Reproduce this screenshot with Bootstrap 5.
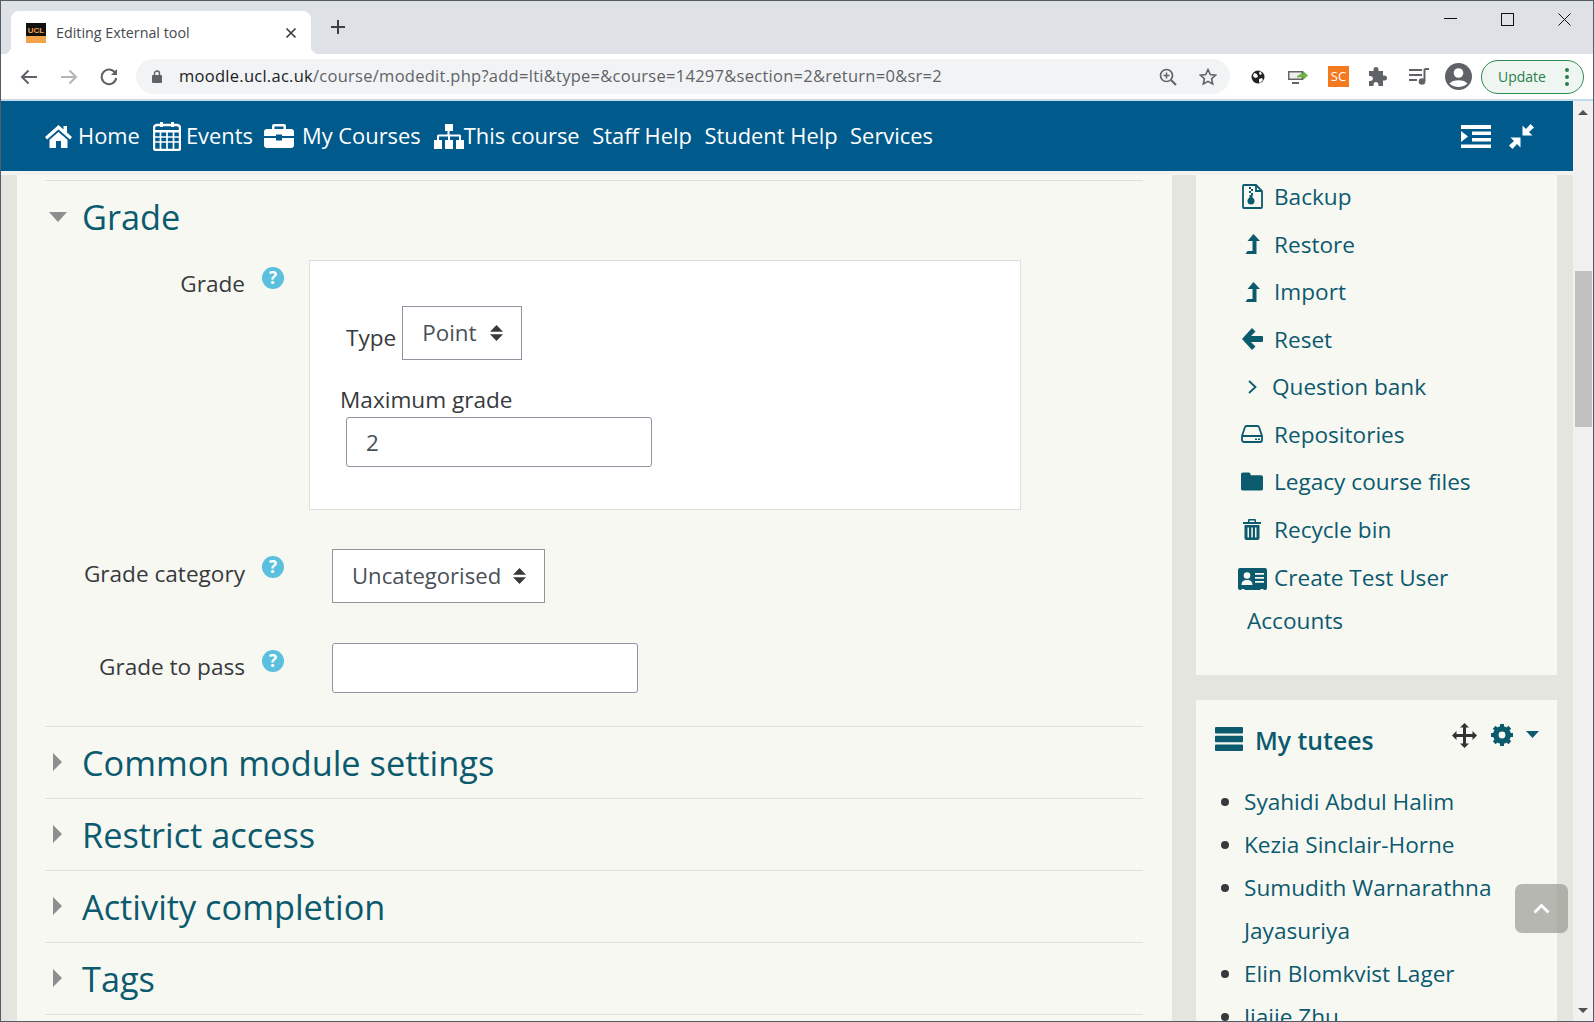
<!DOCTYPE html>
<html lang="en">
<head>
<meta charset="utf-8">
<title>Editing External tool</title>
<link href="https://cdn.jsdelivr.net/npm/bootstrap@5.3.0/dist/css/bootstrap.min.css" rel="stylesheet">
<style>
html,body{height:1022px;overflow:hidden;margin:0;background:#fff}
body{font-family:"Open Sans","Noto Sans",sans-serif;color:#373a3c}
.frame{height:1022px;border:1px solid #525d68;display:flex;flex-direction:column;overflow:hidden}
.tabstrip{height:53px;flex:none;background:#dee1e6;padding:10px 0 0 10px;display:flex;align-items:flex-start}
.tabbox{width:300px;height:43px;background:#fff;border-radius:8px 8px 0 0;display:flex;align-items:center;padding:0 14px 0 15px;position:relative}
.tabbox::before,.tabbox::after{content:"";position:absolute;bottom:0;width:8px;height:8px}
.tabbox::before{left:-8px;background:radial-gradient(circle at 0 0,transparent 8px,#fff 8.5px)}
.tabbox::after{right:-8px;background:radial-gradient(circle at 100% 0,transparent 8px,#fff 8.5px)}
.fav{width:20px;height:20px;background:linear-gradient(#111 0,#111 65%,#f4a24a 65%);color:#f4a24a;font:700 8px/15px "Liberation Sans",sans-serif;text-align:center;flex:none}
.tabtitle{font-size:14.3px;color:#45494e;margin-left:10px;flex:1;white-space:nowrap}
.plusmark{margin:8px 0 0 19px}
.wincontrols{margin-left:auto;display:flex}
.toolbar{height:47px;flex:none;background:#fff;border-bottom:2px solid #c6dbe7;display:flex;align-items:center}
.omni{height:35px;width:1094px;margin-left:18px;background:#f1f3f4;border-radius:18px;display:flex;align-items:center;padding:0 0 0 16px;flex:none}
.urlline{font-size:16.5px;letter-spacing:.27px;color:#5f6368;white-space:nowrap;margin-left:17px;flex:1}
.urlline b{font-weight:400;color:#202124}
.upd{width:103px;height:34px;margin-left:9px;border:1.5px solid #2f8a52;border-radius:17px;background:#eff6f1;color:#2a7d4b;font-size:14px;display:flex;align-items:center;padding-left:16px;flex:none}
.tbicon{flex:none;display:block}
.pagewrap{flex:1;display:flex;min-height:0}
.pageview{flex:1;min-width:0;position:relative;overflow:hidden;display:flex;flex-direction:column}
.sbar{width:20px;flex:none;background:#f1f1f1;display:flex;flex-direction:column;align-items:center;padding-top:9px}
.sbthumb{width:17px;height:156px;background:#c1c1c1;margin-top:156px}
.sbdown{margin-top:auto;margin-bottom:8px}
.topbar{height:70px;flex:none;background:#005a8c;padding:0 0 0 44px}
.topbar .navbar-nav .nav-link{color:#fff;font-size:21.9px;line-height:30px;padding:0;display:flex;align-items:center;white-space:nowrap}
.topbar .nav-link svg{display:block;flex:none}
.thinstrip{height:4px;flex:none;background:#f3f3ef}
.columns{flex:1;min-height:0;background:#e5e5df;display:flex;padding:0 16px;overflow:hidden}
.mainpane{width:1155px;flex:none;background:#f8f8f3;padding:5px 29px 0 28px}
.secrow{border-top:1px solid #e2e2dd;height:72.1px;display:flex;align-items:center;padding-left:8px}
.secrow h3,.secopen h3{font-size:34.3px;font-weight:400;color:#0b5a6e;margin:0;line-height:44px}
.tri-r{width:0;height:0;border-left:9.5px solid #8e8e8e;border-top:9px solid transparent;border-bottom:9px solid transparent;margin-right:20px;margin-top:-1px}
.tri-d{width:0;height:0;border-top:10px solid #8e8e8e;border-left:9.5px solid transparent;border-right:9.5px solid transparent;margin-right:15px;margin-left:4px}
.secopen{border-top:1px solid #e2e2dd;height:546px}
.sechead{display:flex;align-items:center;height:79px;padding-bottom:7px}
.fieldline{display:flex;align-items:flex-start}
.flabel{width:200px;text-align:right;font-size:22.6px;flex:none;color:#373a3c}
.hint{width:22px;height:22px;border-radius:50%;background:#5bc0de;color:#fff;font:700 17px/22px "Open Sans",sans-serif;text-align:center;margin-left:17px;margin-top:7px;flex:none}
.gradebox{width:712px;height:250px;margin-left:25px;background:#fff;border:1px solid #dedede;padding:45px 0 0 36px;flex:none}
.typeline{display:flex;align-items:flex-start;font-size:22.6px}
.form-select.pick{height:54px;border:1px solid #8f959e;border-radius:0;color:#495057;font-size:22.4px;padding:0 44px 0 19px;background-color:#fff;background-image:url("data:image/svg+xml,%3Csvg xmlns='http://www.w3.org/2000/svg' viewBox='0 0 13 16'%3E%3Cpath fill='%23373a3c' d='M6.500 0L13 6.800H0zM6.500 16L0 9.200h13z'/%3E%3C/svg%3E");background-size:13px 16px;background-position:right 18px center;background-repeat:no-repeat;width:auto;box-shadow:none}
.form-select.pick.pickwide{font-size:22.1px;padding-right:42px}
.form-control.entry{height:50px;border:1px solid #8f959e;border-radius:3px;color:#495057;font-size:22.4px;padding:0 19px;background:#fff}
.maxlabel{font-size:22.6px;margin:23px 0 1px -6px;line-height:33px}
.columngap{width:24px;flex:none}
.sidepane{width:361px;flex:none}
.sideblock{background:#f8f8f3;border:0;border-radius:0}
.linklist{list-style:none;margin:0;padding:0 0 33px 45px;font-size:22.6px;line-height:43px;height:500px}
.linklist li{display:flex;align-items:center;margin-bottom:4.5px;color:#0b5a6e}
.linklist li .slot{width:22px;flex:none;display:flex;justify-content:center}
.linklist li .lab{margin-left:11px}
.linklist li .lab.tight{margin-left:9px}
.linklist li.wrapline{display:block;margin:5px 0 0 6px}
.linklist .cardic{display:inline-block;vertical-align:-4px;margin:0 7px 0 -9px}
.tuteehead{display:flex;align-items:flex-start;padding:26px 0 0 19px;height:80px}
.tuteehead h5{font-size:24.8px;font-weight:600;color:#0b5a6e;margin:-2px 0 0 12px;line-height:32px}
.tutees{margin:0;padding:0 0 0 48px;font-size:22.6px;line-height:43px;color:#373a3c}
.tutees a{color:#0b5a6e;text-decoration:none}
.backtop{position:absolute;left:1514px;top:783px;width:53px;height:49px;border-radius:7px;background:rgba(140,140,134,.6);display:flex;align-items:center;justify-content:center}
</style>
</head>
<body>
<div class="frame">
  <div class="tabstrip">
    <div class="tabbox">
      <div class="fav">UCL</div>
      <div class="tabtitle">Editing External tool</div>
      <svg width="12" height="12" viewBox="0 0 12 12"><path d="M1.500 1.500l9 9M10.500 1.500l-9 9" stroke="#3c4043" stroke-width="1.700"/></svg>
    </div>
    <svg class="plusmark" width="16" height="16" viewBox="0 0 16 16"><path d="M8 1v14M1 8h14" stroke="#3c4043" stroke-width="2"/></svg>
    <div class="wincontrols">
      <svg width="150" height="26" viewBox="0 0 150 26"><path d="M1 7.500h13" stroke="#111" stroke-width="1"/><rect x="58.500" y="2.500" width="12" height="12" fill="none" stroke="#111" stroke-width="1"/><path d="M115.500 2.500l12 12M127.500 2.500l-12 12" stroke="#111" stroke-width="1"/></svg>
    </div>
  </div>
  <div class="toolbar">
    <svg class="tbicon" style="margin-left:19px" width="18" height="16" viewBox="0 0 18 16"><path d="M17 8H2M8.500 1.500L2 8l6.500 6.500" fill="none" stroke="#5f6368" stroke-width="2"/></svg>
    <svg class="tbicon" style="margin-left:22px" width="18" height="16" viewBox="0 0 18 16"><path d="M1 8h15M9.500 1.500L16 8l-6.500 6.500" fill="none" stroke="#b4b6b9" stroke-width="2"/></svg>
    <svg class="tbicon" style="margin-left:22px" width="18" height="18" viewBox="0 0 18 18"><path d="M15.200 5A7.300 7.300 0 1 0 16.200 10" fill="none" stroke="#5f6368" stroke-width="2"/><path d="M17 1v6h-6z" fill="#5f6368"/></svg>
    <div class="omni">
      <svg class="tbicon" width="10" height="13" viewBox="0 0 10 13"><path d="M2.500 5V3.500a2.500 2.500 0 0 1 5 0V5" fill="none" stroke="#5f6368" stroke-width="1.400"/><rect y="5" width="10" height="8" rx="1" fill="#5f6368"/></svg>
      <div class="urlline"><b>moodle.ucl.ac.uk</b>/course/modedit.php?add=lti&amp;type=&amp;course=14297&amp;section=2&amp;return=0&amp;sr=2</div>
      <svg class="tbicon" width="18" height="18" viewBox="0 0 18 18"><circle cx="7.500" cy="7.500" r="6" fill="none" stroke="#5f6368" stroke-width="1.700"/><path d="M12 12l5 5" stroke="#5f6368" stroke-width="2"/><path d="M7.500 4.500v6M4.500 7.500h6" stroke="#5f6368" stroke-width="1.500"/></svg>
      <svg class="tbicon" style="margin:0 13px 0 22px" width="18" height="18" viewBox="0 0 18 18"><path d="M9 1.500l2.300 5 5.300.6-4 3.600 1.100 5.300L9 13.300 4.300 16l1.100-5.300-4-3.600 5.300-.6z" fill="none" stroke="#5f6368" stroke-width="1.600"/></svg>
    </div>
    <svg class="tbicon" style="margin-left:21px" width="14" height="14" viewBox="0 0 14 14"><circle cx="7" cy="7" r="6.500" fill="#222"/><path d="M3 3l3 1 1 3-3 1-2-2zM9 1l2 3-2 1-1-2zM8 9l3-1 1 2-3 3-1-1z" fill="#fff"/></svg>
    <svg class="tbicon" style="margin-left:23px" width="20" height="16" viewBox="0 0 20 16"><rect x="0" y="2" width="15" height="9" fill="#666"/><rect x="1.500" y="3.500" width="12" height="6" fill="#eee"/><path d="M4 13h7v2H4z" fill="#666"/><path d="M9 9c0-3 3-4 6-4V2l5 4.500-5 4.500V8c-3 0-5 0-6 1z" fill="#6cb33f"/></svg>
    <div class="tbicon" style="margin-left:20px;width:21px;height:21px;background:#f37a1f;color:#fff;font-size:13px;line-height:21px;text-align:center">SC</div>
    <svg class="tbicon" style="margin-left:20px" width="19" height="19" viewBox="0 0 19 19"><path d="M7 0a2.500 2.500 0 0 1 2.500 2.500V4H14v4.500h1.500a2.500 2.500 0 0 1 0 5H14V19H9.500v-1.500a2.500 2.500 0 0 0-5 0V19H0v-5h1.500a2.500 2.500 0 0 0 0-5H0V4h4.500V2.500A2.500 2.500 0 0 1 7 0z" fill="#5f6368"/></svg>
    <svg class="tbicon" style="margin-left:21px" width="20" height="17" viewBox="0 0 20 17"><path d="M0 2h13M0 7h13M0 12h8" stroke="#5f6368" stroke-width="1.800"/><path d="M15.500 1v12" stroke="#5f6368" stroke-width="2"/><path d="M15.500 1H20" stroke="#5f6368" stroke-width="2"/><circle cx="13" cy="13.500" r="3.300" fill="#5f6368"/></svg>
    <svg class="tbicon" style="margin-left:16px" width="27" height="27" viewBox="0 0 27 27"><circle cx="13.500" cy="13.500" r="13.500" fill="#5f6368"/><circle cx="13.500" cy="10" r="4.800" fill="#fff"/><path d="M4.500 20.500c3-4.500 15-4.500 18 0-4 4.500-14 4.500-18 0z" fill="#fff"/></svg>
    <div class="upd">Update<svg class="ms-auto" style="margin-right:14px" width="4" height="18" viewBox="0 0 4 18"><circle cx="2" cy="2" r="2" fill="#2a7d4b"/><circle cx="2" cy="9" r="2" fill="#2a7d4b"/><circle cx="2" cy="16" r="2" fill="#2a7d4b"/></svg></div>
  </div>
  <div class="pagewrap">
    <div class="pageview">
      <nav class="navbar navbar-expand topbar">
        <ul class="navbar-nav flex-row align-items-center">
          <li class="nav-item"><a class="nav-link" href="#"><svg width="27" height="24" viewBox="0 0 27 24" style="margin-right:6px"><path fill="#fff" d="M13.500 1L0 13l2 2.400L13.500 5.500 25 15.400 27 13l-5-4.500V2h-3.500v3.400zM4.500 15.800l9-7.700 9 7.700V24H16v-7h-5v7H4.500z"/></svg>Home</a></li>
          <li class="nav-item"><a class="nav-link" href="#" style="margin-left:13px"><svg width="28" height="29" viewBox="0 0 28 29" style="margin-right:5px"><path fill="#fff" d="M7 0h3v5H7zM18 0h3v5h-3z"/><path fill="none" stroke="#fff" stroke-width="2.400" d="M4 3h20a3 3 0 0 1 3 3v20a2 2 0 0 1-2 2H3a2 2 0 0 1-2-2V6a3 3 0 0 1 3-3z"/><path fill="#fff" d="M1 8h26v2.500H1z"/><path fill="none" stroke="#fff" stroke-width="1.700" d="M1 15h26M1 20h26M7.500 10v18M14 10v18M20.500 10v18"/></svg>Events</a></li>
          <li class="nav-item"><a class="nav-link" href="#" style="margin-left:11px"><svg width="30" height="24" viewBox="0 0 30 24" style="margin-right:8px"><path fill="#fff" d="M10 0h10a2 2 0 0 1 2 2v3h5a3 3 0 0 1 3 3v4H18v-1.500h-6V12H0V8a3 3 0 0 1 3-3h5V2a2 2 0 0 1 2-2zm.500 2.500V5h9V2.500zM0 14h12v2.500h6V14h12v7a3 3 0 0 1-3 3H3a3 3 0 0 1-3-3z"/></svg>My Courses</a></li>
          <li class="nav-item"><a class="nav-link" href="#" style="margin-left:13px"><svg width="30" height="25" viewBox="0 0 30 25"><path fill="#fff" d="M11 0h8v7h-3.500v3.500H26a1.500 1.500 0 0 1 1 1.500v4h-2v-3.500h-9V16h-2v-3.500H5V16H3v-4a1.500 1.500 0 0 1 1.500-1.500h9V7H11zM0 16h8v9H0zM11 16h8v9h-8zM22 16h8v9h-8z"/></svg>This course</a></li>
          <li class="nav-item"><a class="nav-link" href="#" style="margin-left:12.500px">Staff Help</a></li>
          <li class="nav-item"><a class="nav-link" href="#" style="margin-left:12.500px">Student Help</a></li>
          <li class="nav-item"><a class="nav-link" href="#" style="margin-left:12.500px">Services</a></li>
        </ul>
        <div class="ms-auto d-flex align-items-center" style="margin-right:39px">
          <svg width="30" height="23" viewBox="0 0 30 23" style="margin-right:18px"><path fill="#fff" d="M0 0h30v4H0zM11 6.500h19v3.500H11zM11 13h19v3.500H11zM0 19.500h30V23H0zM0 6l7 5.500L0 17z"/></svg>
          <svg width="25" height="25" viewBox="0 0 25 25"><path fill="#fff" d="M13.500 1.500V11.500H23.500l-3.500-3.500 5-4.500L21.500 0l-4.500 5zM11.500 13.500H1.500L5 17l-5 4.500L3.500 25l4.500-5 3.500 3.500z"/></svg>
        </div>
      </nav>
      <div class="thinstrip"></div>
      <div class="columns">
        <main class="mainpane">
          <section class="secopen">
            <div class="sechead"><span class="tri-d"></span><h3>Grade</h3></div>
            <div class="fieldline">
              <div class="flabel" style="padding-top:7px">Grade</div>
              <div class="hint">?</div>
              <div class="gradebox">
                <div class="typeline"><span style="padding-top:15px;margin-right:6px">Type</span><select class="form-select pick"><option>Point</option></select></div>
                <label class="d-block maxlabel">Maximum grade</label>
                <input class="form-control entry" type="text" value="2" style="width:306px">
              </div>
            </div>
            <div class="fieldline" style="margin-top:39px">
              <div class="flabel" style="padding-top:8px">Grade category</div>
              <div class="hint">?</div>
              <div style="margin-left:48px"><select class="form-select pick pickwide"><option>Uncategorised</option></select></div>
            </div>
            <div class="fieldline" style="margin-top:40px">
              <div class="flabel" style="padding-top:7px">Grade to pass</div>
              <div class="hint">?</div>
              <div style="margin-left:48px"><input class="form-control entry" type="text" style="width:306px"></div>
            </div>
          </section>
          <section class="secrow"><span class="tri-r"></span><h3>Common module settings</h3></section>
          <section class="secrow"><span class="tri-r"></span><h3>Restrict access</h3></section>
          <section class="secrow"><span class="tri-r"></span><h3>Activity completion</h3></section>
          <section class="secrow"><span class="tri-r"></span><h3>Tags</h3></section>
          <section class="secrow"></section>
        </main>
        <div class="columngap"></div>
        <aside class="sidepane">
          <div class="card sideblock">
            <ul class="linklist">
              <li><span class="slot"><svg width="21" height="25" viewBox="0 0 21 25"><path fill="none" stroke="#0b5a6e" stroke-width="1.800" d="M2 1h12l6 6v16a1 1 0 0 1-1 1H2a1 1 0 0 1-1-1V2a1 1 0 0 1 1-1zM14 1v6h6"/><path fill="#0b5a6e" d="M7 3h2v2H7zM9 5h2v2H9zM7 7h2v2H7zM9 9h2v2H9z"/><circle cx="9" cy="17" r="3.500" fill="#0b5a6e"/><path fill="#0b5a6e" d="M7.500 11h3v4h-3z"/></svg></span><span class="lab">Backup</span></li>
              <li><span class="slot"><svg width="15" height="20" viewBox="0 0 15 20"><path fill="#0b5a6e" d="M8 0l6.500 7H11v13H0l2-3h5V7H2z" transform="translate(.5 0)"/></svg></span><span class="lab">Restore</span></li>
              <li><span class="slot"><svg width="15" height="20" viewBox="0 0 15 20"><path fill="#0b5a6e" d="M8 0l6.500 7H11v13H0l2-3h5V7H2z" transform="translate(.5 0)"/></svg></span><span class="lab">Import</span></li>
              <li><span class="slot"><svg width="21" height="22" viewBox="0 0 21 22"><path fill="#0b5a6e" d="M10 0l3.500 3.500L9 8h11a1 1 0 0 1 1 1v4a1 1 0 0 1-1 1H9l4.500 4.500L10 22 0 11z"/></svg></span><span class="lab">Reset</span></li>
              <li><span class="slot"><svg width="9" height="14" viewBox="0 0 9 14"><path fill="none" stroke="#0b5a6e" stroke-width="1.800" d="M1 1l6.500 6L1 13"/></svg></span><span class="lab tight">Question bank</span></li>
              <li><span class="slot"><svg width="22" height="18" viewBox="0 0 22 18"><path fill="none" stroke="#0b5a6e" stroke-width="1.800" d="M1 11l3-9a1.500 1.500 0 0 1 1.500-1h11A1.500 1.500 0 0 1 18 2l3 9v4a2 2 0 0 1-2 2H3a2 2 0 0 1-2-2zM1 11h20"/><path fill="#0b5a6e" d="M14 13.500h2v1.500h-2zM17 13.500h2v1.500h-2z"/></svg></span><span class="lab">Repositories</span></li>
              <li><span class="slot"><svg width="23" height="19" viewBox="0 0 23 19"><path fill="#0b5a6e" d="M2 0h6a2 2 0 0 1 2 2v1h11a2 2 0 0 1 2 2v12a2 2 0 0 1-2 2H2a2 2 0 0 1-2-2V2a2 2 0 0 1 2-2z"/></svg></span><span class="lab">Legacy course files</span></li>
              <li><span class="slot"><svg width="18" height="21" viewBox="0 0 18 21"><path fill="#0b5a6e" d="M6 0h6a1 1 0 0 1 1 1v2h5v2H0V3h5V1a1 1 0 0 1 1-1zm.500 1.500V3h5V1.500zM1.500 6h15v13a2 2 0 0 1-2 2h-11a2 2 0 0 1-2-2z"/><path fill="#f8f8f3" d="M4.500 8.500H6v10H4.500zM8.300 8.500h1.500v10H8.300zM12 8.500h1.500v10H12z"/></svg></span><span class="lab">Recycle bin</span></li>
              <li class="wrapline"><svg class="cardic" width="29" height="22" viewBox="0 0 29 22"><path fill="#0b5a6e" d="M2 0h25a2 2 0 0 1 2 2v18a2 2 0 0 1-2 2h-1.500v-1h-3v1h-16v-1h-3v1H2a2 2 0 0 1-2-2V2a2 2 0 0 1 2-2z"/><circle cx="9" cy="7.500" r="3.300" fill="#f8f8f3"/><path fill="#f8f8f3" d="M3.500 17c0-4 2.500-5 5.500-5s5.500 1 5.500 5zM17 5h9v1.800h-9zM17 9h9v1.800h-9zM17 13h9v1.800h-9z"/></svg>Create Test User<br>Accounts</li>
            </ul>
          </div>
          <div style="height:25px"></div>
          <div class="card sideblock">
            <div class="tuteehead">
              <svg width="28" height="24" viewBox="0 0 28 24" style="margin-top:1px"><path fill="#0b5a6e" d="M1 0h26a1 1 0 0 1 1 1v4.500a1 1 0 0 1-1 1H1a1 1 0 0 1-1-1V1a1 1 0 0 1 1-1zM1 8.750h26a1 1 0 0 1 1 1v4.500a1 1 0 0 1-1 1H1a1 1 0 0 1-1-1v-4.500a1 1 0 0 1 1-1zM1 17.500h26a1 1 0 0 1 1 1V23a1 1 0 0 1-1 1H1a1 1 0 0 1-1-1v-4.500a1 1 0 0 1 1-1z"/></svg>
              <h5>My tutees</h5>
              <svg class="ms-auto" width="25" height="25" viewBox="0 0 25 25" style="margin-top:-3px"><path fill="#333" d="M12.500 0l4.500 4.500H14V11h6.500V8l4.500 4.500-4.500 4.500v-3H14v6.500h3L12.500 25 8 20.500h3V14H4.500v3L0 12.500 4.500 8v3H11V4.500H8z"/></svg>
              <svg width="22" height="22" viewBox="0 0 22 22" style="margin:-2px 0 0 14px"><g fill="#0b5a6e"><path d="M9 0h4v22H9zM0 9h22v4H0z"/><path d="M9 0h4v22H9z" transform="rotate(45 11 11)"/><path d="M9 0h4v22H9z" transform="rotate(-45 11 11)"/></g><circle cx="11" cy="11" r="7" fill="none" stroke="#0b5a6e" stroke-width="4"/><circle cx="11" cy="11" r="3.400" fill="#f8f8f3"/></svg>
              <svg width="13" height="7" viewBox="0 0 13 7" style="margin:5px 18px 0 13px"><path fill="#0b5a6e" d="M0 0h13L6.500 7z"/></svg>
            </div>
            <ul class="tutees">
              <li><a href="#">Syahidi Abdul Halim</a></li>
              <li><a href="#">Kezia Sinclair-Horne</a></li>
              <li><a href="#">Sumudith Warnarathna Jayasuriya</a></li>
              <li><a href="#">Elin Blomkvist Lager</a></li>
              <li><a href="#">Jiajie Zhu</a></li>
            </ul>
          </div>
        </aside>
      </div>
      <a class="backtop" href="#" aria-label="Back to top"><svg width="17" height="11" viewBox="0 0 17 11"><path fill="none" stroke="#fff" stroke-width="2.800" d="M1.500 9.500l7-7 7 7"/></svg></a>
    </div>
    <div class="sbar">
      <svg width="10" height="5" viewBox="0 0 10 5"><path fill="#505050" d="M5 0l5 5H0z"/></svg>
      <div class="sbthumb"></div>
      <svg class="sbdown" width="10" height="5" viewBox="0 0 10 5"><path fill="#505050" d="M0 0h10L5 5z"/></svg>
    </div>
  </div>
</div>
</body>
</html>
